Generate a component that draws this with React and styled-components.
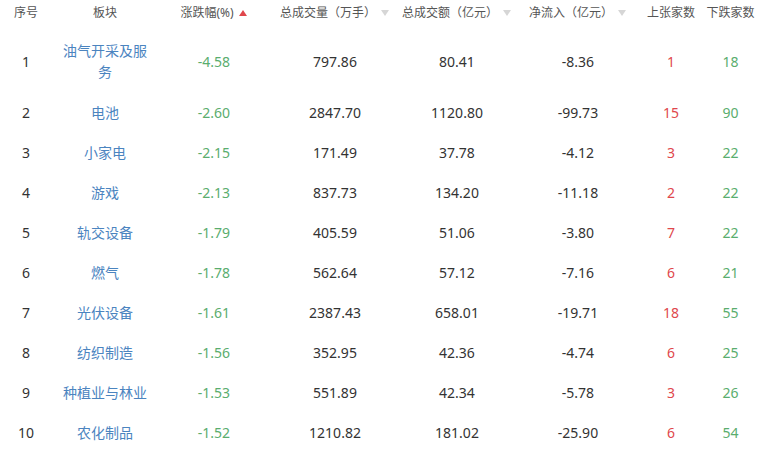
import React from "react";
import styled, { createGlobalStyle } from "styled-components";

const GlobalStyle = createGlobalStyle`
   body {
      margin: 0;
      background: #fff;
      font-family: "Noto Sans", "Noto Sans CJK SC", sans-serif;
   }
`;

const rows = [
   ["1", "油气开采及服务", "-4.58", "797.86", "80.41", "-8.36", "1", "18"],
   ["2", "电池", "-2.60", "2847.70", "1120.80", "-99.73", "15", "90"],
   ["3", "小家电", "-2.15", "171.49", "37.78", "-4.12", "3", "22"],
   ["4", "游戏", "-2.13", "837.73", "134.20", "-11.18", "2", "22"],
   ["5", "轨交设备", "-1.79", "405.59", "51.06", "-3.80", "7", "22"],
   ["6", "燃气", "-1.78", "562.64", "57.12", "-7.16", "6", "21"],
   ["7", "光伏设备", "-1.61", "2387.43", "658.01", "-19.71", "18", "55"],
   ["8", "纺织制造", "-1.56", "352.95", "42.36", "-4.74", "6", "25"],
   ["9", "种植业与林业", "-1.53", "551.89", "42.34", "-5.78", "3", "26"],
   ["10", "农化制品", "-1.52", "1210.82", "181.02", "-25.90", "6", "54"],
];

const headers = [
   { label: "序号" },
   { label: "板块" },
   { label: "涨跌幅(%)", sort: "up" },
   { label: "总成交量（万手）", sort: "down" },
   { label: "总成交额（亿元）", sort: "down" },
   { label: "净流入（亿元）", sort: "down" },
   { label: "上张家数" },
   { label: "下跌家数" },
];

const cellTone = ["plain", "name", "down", "plain", "plain", "plain", "up", "down"];

const SortIcon = ({ dir }) => (
   <SortBox>
      {dir === "up" ? (
         <svg width="8" height="6" viewBox="0 0 8 6">
            <path d="M4 0 L8 6 L0 6 Z" fill="#e0474c" />
         </svg>
      ) : (
         <svg width="8" height="6" viewBox="0 0 8 6">
            <path d="M0 0 L8 0 L4 6 Z" fill="#d6d6d6" />
         </svg>
      )}
   </SortBox>
);

const App = () => {
   return (
      <>
         <GlobalStyle />
         <Table>
            <HeadRow>
               {headers.map((h) => (
                  <HeadCell key={h.label}>
                     {h.label}
                     {h.sort && <SortIcon dir={h.sort} />}
                  </HeadCell>
               ))}
            </HeadRow>
            {rows.map((row) => (
               <Row key={row[0]} tall={row[1].length > 6}>
                  {row.map((value, i) => (
                     <Cell key={i} tone={cellTone[i]}>
                        {value}
                     </Cell>
                  ))}
               </Row>
            ))}
         </Table>
      </>
   );
};

export default App;

const columns = "52px 106px 112px 130px 114px 128px 58px 61px";

const Table = styled.div`
   width: 761px;
   display: flex;
   flex-direction: column;
`;

const HeadRow = styled.div`
   display: grid;
   grid-template-columns: ${columns};
   height: 30px;
   padding-top: 3px;
   box-sizing: border-box;
`;

const HeadCell = styled.div`
   display: flex;
   justify-content: center;
   align-items: flex-start;
   white-space: nowrap;
   font-size: 12px;
   line-height: 20px;
   color: #555;
`;

const SortBox = styled.span`
   display: inline-flex;
   align-items: center;
   justify-content: center;
   width: 10px;
   height: 20px;
   margin-left: 4px;
`;

const Row = styled.div`
   display: grid;
   grid-template-columns: ${columns};
   height: ${({ tall }) => (tall ? "62px" : "40px")};
`;

const toneColor = {
   plain: "#333",
   name: "#4b84bf",
   down: "#5aad6e",
   up: "#e0474c",
};

const Cell = styled.div`
   display: flex;
   align-items: center;
   justify-content: center;
   text-align: center;
   padding: ${({ tone }) => (tone === "name" ? "0 10px" : "0")};
   font-size: 14px;
   line-height: 21px;
   color: ${({ tone }) => toneColor[tone]};
`;
